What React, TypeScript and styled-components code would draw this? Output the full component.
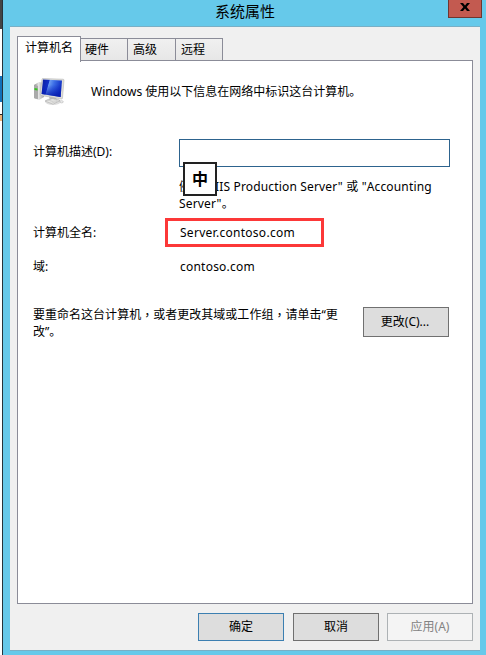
import React from "react";
import styled, { createGlobalStyle } from "styled-components";

const GlobalStyle = createGlobalStyle`
  * { box-sizing: border-box; }
  body { margin: 0; overflow: hidden; background: #fff; }
  button, input { font: inherit; }
`;

const Screen = styled.div`
  width: 486px;
  height: 655px;
  display: flex;
  overflow: hidden;
  font: 12px/17px "Noto Sans", "Noto Sans CJK SC", sans-serif;
  color: #000;
`;

const Backdrop = styled.div`
  width: 3px;
  flex: none;
  border-right: 1px solid #26323a;
  display: flex;
  flex-direction: column;
`;

const Slice = styled.div<{ $h: number; $color: string }>`
  height: ${(p) => p.$h}px;
  background: ${(p) => p.$color};
`;

const Window = styled.div`
  width: 483px;
  flex: none;
  display: flex;
  flex-direction: column;
  background: #66c9ea;
  padding: 0 6px 4px 7px;
`;

const TitleBar = styled.header`
  height: 26px;
  flex: none;
  position: relative;
  text-align: center;
`;

const Title = styled.h1`
  margin: 0;
  font: 15px/22px "Noto Sans", "Noto Sans CJK SC", sans-serif;
`;

const CloseButton = styled.button`
  position: absolute;
  top: 0;
  right: -2px;
  width: 34px;
  height: 18px;
  padding: 3px 0 0;
  border: 1px solid #70352f;
  border-top: 0;
  background: #c35a50;
  display: flex;
  align-items: flex-start;
  justify-content: center;
`;

const Client = styled.main`
  height: 625px;
  background: #f0f0f0;
  border-top: 1px solid #79afc5;
  border-bottom: 1px solid #79afc5;
  padding: 9px 7px 0;
  display: flex;
  flex-direction: column;
`;

const Tabs = styled.nav`
  display: flex;
  align-items: flex-end;
  height: 25px;
  flex: none;
  z-index: 1;
`;

const Tab = styled.div<{ $w: number; $active?: boolean; $indent?: number }>`
  width: ${(p) => p.$w}px;
  height: ${(p) => (p.$active ? 26 : 23)}px;
  margin-bottom: ${(p) => (p.$active ? -1 : 0)}px;
  padding-top: ${(p) => (p.$active ? 0 : 1)}px;
  padding-left: ${(p) => p.$indent ?? 5}px;
  line-height: ${(p) => (p.$active ? 21 : 20)}px;
  border: 1px solid #8b8c98;
  border-bottom-width: ${(p) => (p.$active ? 0 : 1)}px;
  border-left-width: ${(p) => (p.$active ? 1 : 0)}px;
  background: ${(p) => (p.$active ? "#fff" : "linear-gradient(#f0f0f0, #e7e7e7)")};
  white-space: nowrap;
`;

const Panel = styled.section`
  width: 456px;
  height: 544px;
  flex: none;
  margin-top: -1px;
  border: 1px solid #8b8c98;
  background: #fff;
  padding-left: 15px;
`;

const Intro = styled.div`
  height: 78px;
  padding-top: 15px;
  display: flex;
  gap: 26px;
`;

const IntroText = styled.p`
  margin: 7px 0 0;
`;

const Field = styled.div<{ $h: number }>`
  display: grid;
  grid-template-columns: 146px 271px;
  height: ${(p) => p.$h}px;
  align-items: start;
`;

const Label = styled.label<{ $top?: number }>`
  padding-top: ${(p) => p.$top ?? 0}px;
`;

const Value = styled.span`
  padding-left: 1px;
  letter-spacing: 0.22px;
`;

const InputArea = styled.div`
  position: relative;
`;

const Input = styled.input`
  display: block;
  width: 271px;
  height: 28px;
  border: 1px solid #2d638e;
  background: #fff;
  outline: 0;
`;

const Hint = styled.p`
  margin: 11px 0 0;
  letter-spacing: 0.16px;
  white-space: nowrap;
`;

const ImeBadge = styled.div`
  position: absolute;
  left: 4px;
  top: 23px;
  width: 34px;
  height: 34px;
  border: 2px solid #222;
  background: #fff;
  font: 700 16px/29px "Noto Sans CJK SC", sans-serif;
  text-align: center;
`;

const Highlight = styled.div`
  width: 159px;
  height: 29px;
  margin-left: -14px;
  border: 3px solid #fc3838;
  padding: 3px 0 0 12px;
  letter-spacing: 0.28px;
`;

const Rename = styled.div`
  display: flex;
  align-items: flex-start;
  & > button {
    margin-top: 1px;
    padding-right: 2px;
  }
`;

const RenameText = styled.p`
  width: 330px;
  margin: 0;
  letter-spacing: 0.02px;
  white-space: nowrap;
`;

const Comma = styled.span`
  font-family: "Noto Sans CJK TC", sans-serif;
  line-height: 0;
  vertical-align: -1px;
`;

const Button = styled.button<{ $kind?: "default" | "disabled"; $h?: number }>`
  width: 86px;
  height: ${(p) => p.$h ?? 28}px;
  padding: 0 0 1px;
  border: 1px solid ${(p) => (p.$kind === "default" ? "#3c7fb1" : p.$kind === "disabled" ? "#adb2b5" : "#707070")};
  background: ${(p) => (p.$kind === "disabled" ? "#f4f4f4" : "#dddddd")};
  color: ${(p) => (p.$kind === "disabled" ? "#838383" : "#000")};
`;

const Footer = styled.footer`
  display: flex;
  margin: 9px 0 0 181px;
  gap: 9px;
  & > :last-child { margin-left: -1px; }
`;

const ComputerIcon = () => (
  <svg width="32" height="32" viewBox="0 0 32 32">
    <defs>
      <linearGradient id="screen" x1="0" y1="0" x2="1" y2="0.25">
        <stop offset="0" stopColor="#0a1c9c" />
        <stop offset=".36" stopColor="#1230c8" />
        <stop offset=".4" stopColor="#6c9cf2" />
        <stop offset=".62" stopColor="#3c6ee6" />
        <stop offset="1" stopColor="#1030c4" />
      </linearGradient>
      <linearGradient id="shade" x1="0" y1="0" x2="0" y2="1">
        <stop offset=".3" stopColor="#0820c0" stopOpacity="0" />
        <stop offset="1" stopColor="#0418a8" stopOpacity=".9" />
      </linearGradient>
      <linearGradient id="tower" x1="0" y1="0" x2="1" y2="0">
        <stop offset="0" stopColor="#888" />
        <stop offset=".45" stopColor="#e4e4e4" />
        <stop offset="1" stopColor="#aaa" />
      </linearGradient>
    </defs>
    <path d="M1 9 6 6 11 7V21L6 24 1 22Z" fill="url(#tower)" />
    <path d="M1 9 5 10V23L1 22Z" fill="#aaa" />
    <path d="M1.5 12 4.5 12.6V14.6L1.5 14Z" fill="#35c51f" />
    <ellipse cx="20" cy="25.5" rx="8" ry="3.5" fill="#ddd" />
    <path d="M16 20H24L23 25Q20 28 17 25Z" fill="#bbb" />
    <path d="M9 3Q9 2.5 10 2.5L30 3.2Q31 3.3 31 4L29.5 22Q29.5 23 28.5 23L8 19.5Q7 19.3 7.2 18Z" fill="#deded9" stroke="#aaa" strokeWidth=".5" />
    <path id="display" d="M10 3.5 29 4.5 27.6 21 8.6 18Z" fill="url(#screen)" />
    <path d="M10 3.5 29 4.5 27.6 21 8.6 18Z" fill="url(#shade)" />
    <path d="M12 25 20 22.4 27 24.6 20 28.2Z" fill="#f1f1ee" stroke="#aaa" strokeWidth=".6" />
    <path d="m14.5 25 8-1.6M16.5 26.1l8-1.7M18.5 27l6-1.6" stroke="#bbb" strokeWidth=".6" />
    <ellipse cx="28.6" cy="25.8" rx="1.7" ry="1.1" fill="#eee" stroke="#aaa" strokeWidth=".5" />
  </svg>
);

export default function App() {
  return (
    <>
      <GlobalStyle />
      <Screen>
        <Backdrop>
          <Slice $h={29} $color="#444" />
          <Slice $h={47} $color="#fff" />
          <Slice $h={26} $color="#1271b9" />
          <Slice $h={12} $color="#fff" />
          <Slice $h={1} $color="#222" />
          <Slice $h={6} $color="#eab277" />
          <Slice $h={534} $color="#fff" />
        </Backdrop>
        <Window>
          <TitleBar>
            <Title>系统属性</Title>
            <CloseButton aria-label="关闭">
              <svg width="10" height="8" viewBox="0 0 10 8">
                <path d="M0 0H3L5 2.6 7 0H10L6.6 4 10 8H7L5 5.6 3 8H0L3.4 4Z" fill="#000" />
              </svg>
            </CloseButton>
          </TitleBar>
          <Client>
            <Tabs>
              <Tab $w={64} $active $indent={7}>计算机名</Tab>
              <Tab $w={47} $indent={4}>硬件</Tab>
              <Tab $w={48}>高级</Tab>
              <Tab $w={47}>远程</Tab>
            </Tabs>
            <Panel>
              <Intro>
                <ComputerIcon />
                <IntroText>Windows 使用以下信息在网络中标识这台计算机。</IntroText>
              </Intro>
              <Field $h={79}>
                <Label $top={4}>计算机描述(D):</Label>
                <InputArea>
                  <Input aria-label="计算机描述" />
                  <Hint>例如: "IIS Production Server" 或 "Accounting<br />Server"。</Hint>
                  <ImeBadge>中</ImeBadge>
                </InputArea>
              </Field>
              <Field $h={40}>
                <Label $top={6}>计算机全名:</Label>
                <Highlight>Server.contoso.com</Highlight>
              </Field>
              <Field $h={48}>
                <Label>域:</Label>
                <Value>contoso.com</Value>
              </Field>
              <Rename>
                <RenameText>要重命名这台计算机<Comma>，</Comma>或者更改其域或工作组<Comma>，</Comma>请单击“更<br />改”。</RenameText>
                <Button $h={30}>更改(C)...</Button>
              </Rename>
            </Panel>
            <Footer>
              <Button $kind="default">确定</Button>
              <Button>取消</Button>
              <Button $kind="disabled" disabled>应用(A)</Button>
            </Footer>
          </Client>
        </Window>
      </Screen>
    </>
  );
}
